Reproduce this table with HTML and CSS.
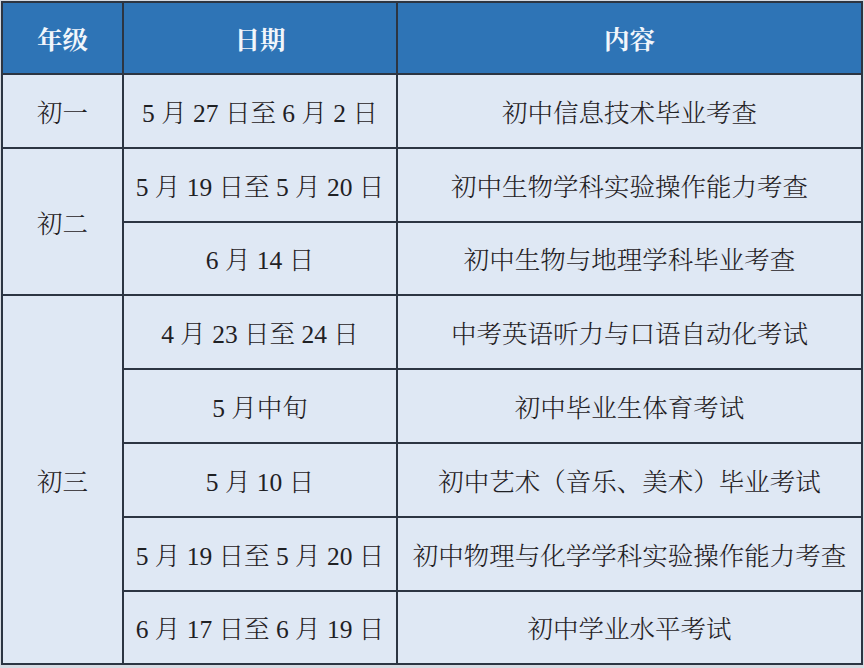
FILE: index.html
```html
<!DOCTYPE html>
<html lang="zh-CN">
<head>
<meta charset="utf-8">
<link rel="stylesheet" href="styles.css">
</head>
<body>
<div class="wrap">
<table class="schedule">
  <colgroup>
    <col class="c-grade">
    <col class="c-date">
    <col class="c-content">
  </colgroup>
  <thead>
    <tr><th>年级</th><th>日期</th><th>内容</th></tr>
  </thead>
  <tbody>
    <tr><td>初一</td><td>5 月 27 日至 6 月 2 日</td><td>初中信息技术毕业考查</td></tr>
    <tr><td rowspan="2">初二</td><td>5 月 19 日至 5 月 20 日</td><td>初中生物学科实验操作能力考查</td></tr>
    <tr><td>6 月 14 日</td><td>初中生物与地理学科毕业考查</td></tr>
    <tr><td rowspan="5">初三</td><td>4 月 23 日至 24 日</td><td>中考英语听力与口语自动化考试</td></tr>
    <tr><td>5 月中旬</td><td>初中毕业生体育考试</td></tr>
    <tr><td>5 月 10 日</td><td>初中艺术（音乐、美术）毕业考试</td></tr>
    <tr><td>5 月 19 日至 5 月 20 日</td><td>初中物理与化学学科实验操作能力考查</td></tr>
    <tr><td>6 月 17 日至 6 月 19 日</td><td>初中学业水平考试</td></tr>
  </tbody>
</table>
</div>
</body>
</html>
```

FILE: styles.css
```css
html, body {
  margin: 0;
  padding: 0;
  background: #d6dbe2;
}
.wrap {
  padding: 1px 0 0 1px;
  width: 864px;
  height: 668px;
  box-sizing: border-box;
}
.schedule {
  border-collapse: collapse;
  table-layout: fixed;
  width: 860px;
  font-family: "Liberation Serif", "Noto Serif CJK SC", "Noto Sans CJK SC", serif;
  font-size: 25.5px;
  color: #1f2124;
}
.c-grade { width: 121px; }
.c-date { width: 274px; }
.c-content { width: 465px; }
.schedule th,
.schedule td {
  border: 2px solid #2c3542;
  text-align: center;
  vertical-align: middle;
  padding: 0;
  white-space: nowrap;
}
.schedule th {
  background: #2e74b6;
  color: #f2f6fb;
  font-weight: bold;
  height: 70px;
}
.schedule td {
  background: #dfe8f4;
  font-weight: 300;
  height: 71.8px;
}
```
